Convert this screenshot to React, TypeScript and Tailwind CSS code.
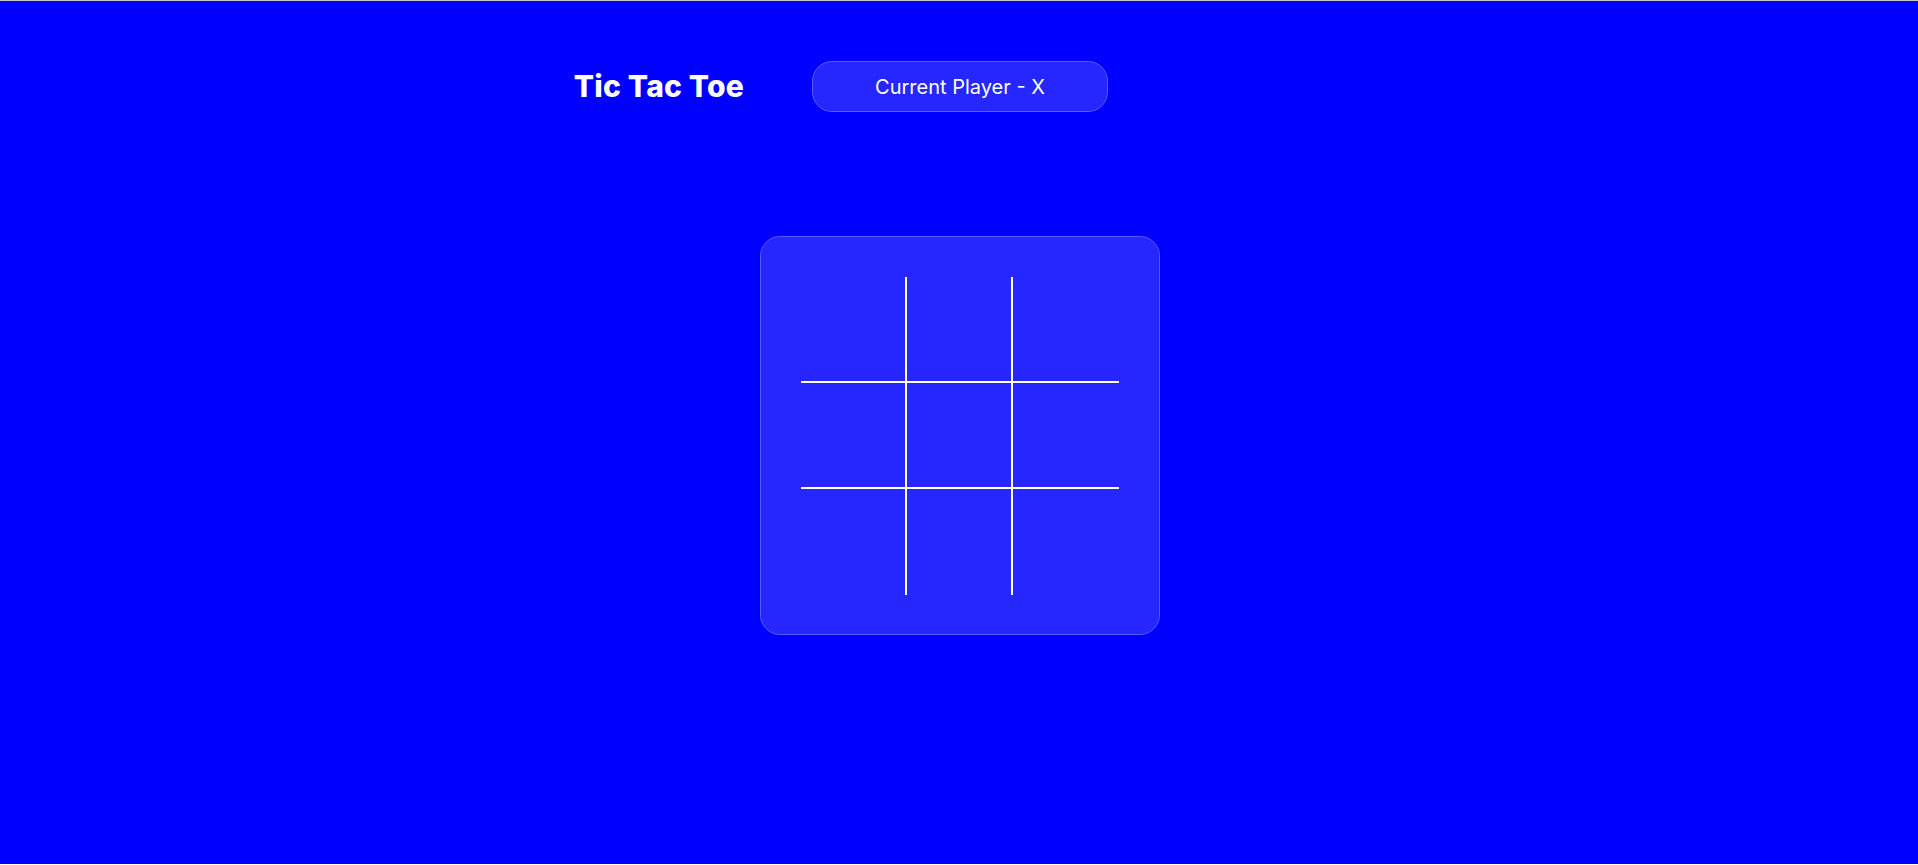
import React from "react";

export default function App() {
  const cells = Array.from({ length: 9 }, (_, i) => i);
  return (
    <div className="min-h-[864px] bg-[#0000ff] font-['Inter',sans-serif] text-white">
      <div className="h-px bg-[#c4c4c4]" />
      <header className="grid grid-cols-[1fr_auto_1fr] items-center pt-[60px]">
        <h1 className="justify-self-end mr-[66px] text-[30px] font-extrabold tracking-[0.2px]">Tic Tac Toe</h1>
        <div className="ml-[2px] flex h-[51px] w-[296px] items-center justify-center rounded-[20px] border border-[#5a5aff] bg-[#2626ff] text-[20px]">
          Current Player - X
        </div>
        <div />
      </header>
      <main className="flex justify-center pt-[124px]">
        <div className="ml-[2px] flex h-[399px] w-[400px] items-center justify-center rounded-[20px] border border-[#5a5aff] bg-[#2626ff]">
          <div className="grid grid-cols-[106px_106px_106px] grid-rows-[106px_106px_106px]">
            {cells.map((i) => {
              const col = i % 3;
              const row = Math.floor(i / 3);
              return (
                <div
                  key={i}
                  className={
                    (col < 2 ? "border-r-2 " : "") +
                    (row < 2 ? "border-b-2 " : "") +
                    "border-white"
                  }
                />
              );
            })}
          </div>
        </div>
      </main>
    </div>
  );
}
